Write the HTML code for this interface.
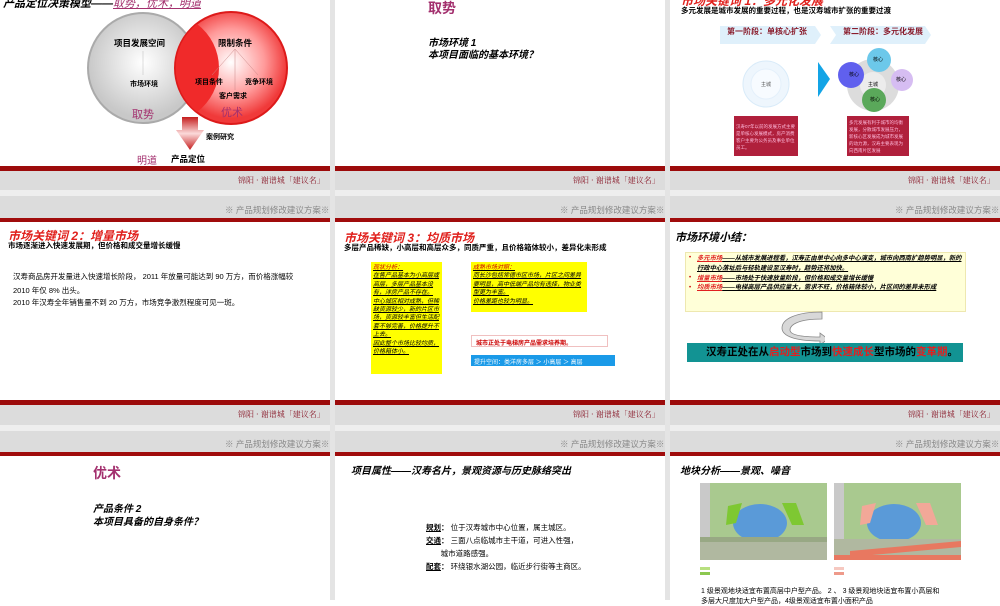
<!DOCTYPE html>
<html><head><meta charset="utf-8"><style>
*{margin:0;padding:0;box-sizing:border-box}
body{width:1000px;height:600px;overflow:hidden;background:#fff;position:relative;font-family:"Liberation Sans","Noto Sans CJK SC",sans-serif;color:#000}
.a{position:absolute;white-space:nowrap}
.sep{position:absolute;top:0;height:600px;width:5px;background:#e4e4e4}
.band{position:absolute;left:0;width:1000px;background:#9c0b0b}
.gray{position:absolute;left:0;width:1000px;background:#dcdcdc}
.gap{position:absolute;left:0;width:1000px;background:#eeeeee}
.ft{position:absolute;font-family:"Noto Serif CJK SC",serif;font-size:8px;color:#8a1c2c;white-space:nowrap}
.hd{position:absolute;font-size:8.5px;color:#888;white-space:nowrap}
.rt{color:#e0201c;font-style:italic;font-weight:bold;font-size:12px}
.bt{font-weight:bold;font-size:8.5px}
.pu{color:#a3306e}
.s7{font-size:7px}
</style></head><body>

<div class="band" style="top:166px;height:5px"></div>
<div class="gray" style="top:171px;height:19px"></div>
<div class="gap" style="top:190px;height:6px"></div>
<div class="gray" style="top:196px;height:22px"></div>
<div class="band" style="top:218px;height:4px;background:#a00c0c"></div>
<div class="band" style="top:400px;height:5px"></div>
<div class="gray" style="top:405px;height:20px"></div>
<div class="gap" style="top:425px;height:6px"></div>
<div class="gray" style="top:431px;height:21px"></div>
<div class="band" style="top:452px;height:4px;background:#a00c0c"></div>
<div class="sep" style="left:330px"></div>
<div class="sep" style="left:665px"></div>

<div class="ft" style="left:238px;top:175px">锦阳 · 谢谱城「建议名」</div>
<div class="ft" style="left:573px;top:175px">锦阳 · 谢谱城「建议名」</div>
<div class="ft" style="left:908px;top:175px">锦阳 · 谢谱城「建议名」</div>
<div class="ft" style="left:238px;top:409px">锦阳 · 谢谱城「建议名」</div>
<div class="ft" style="left:573px;top:409px">锦阳 · 谢谱城「建议名」</div>
<div class="ft" style="left:908px;top:409px">锦阳 · 谢谱城「建议名」</div>
<div class="hd" style="left:225px;top:204px">※ 产品规划修改建议方案※</div>
<div class="hd" style="left:560px;top:204px">※ 产品规划修改建议方案※</div>
<div class="hd" style="left:895px;top:204px">※ 产品规划修改建议方案※</div>
<div class="hd" style="left:225px;top:438px">※ 产品规划修改建议方案※</div>
<div class="hd" style="left:560px;top:438px">※ 产品规划修改建议方案※</div>
<div class="hd" style="left:895px;top:438px">※ 产品规划修改建议方案※</div>

<!-- slide 1 -->
<div class="a" style="left:3px;top:-5px;font-size:11px;font-weight:bold;font-style:italic">产品定位决策模型——<span class="pu" style="font-weight:normal;text-decoration:underline">取势，优术，明道</span></div>
<svg class="a" style="left:80px;top:5px" width="220" height="150">
<defs><radialGradient id="g1" cx="50%" cy="45%"><stop offset="0" stop-color="#fff"/><stop offset="1" stop-color="#c8c8c8"/></radialGradient>
<radialGradient id="g2" cx="50%" cy="45%"><stop offset="0" stop-color="#fff"/><stop offset="0.6" stop-color="#ff9a9a"/><stop offset="1" stop-color="#f03a3a"/></radialGradient>
<linearGradient id="g3" x1="0" y1="0" x2="0" y2="1"><stop offset="0" stop-color="#c51d1d"/><stop offset="0.5" stop-color="#fbdada"/><stop offset="1" stop-color="#c51d1d"/></linearGradient></defs>
<circle cx="63" cy="63" r="55" fill="url(#g1)" stroke="#aaa" stroke-width="2"/>
<circle cx="151" cy="63" r="56" fill="url(#g2)" stroke="#dd1a1a" stroke-width="2"/>
<path d="M117 19 A56 56 0 0 0 117 107 A55 55 0 0 0 117 19Z" fill="#f02a2a"/>
<line x1="63" y1="46" x2="63" y2="70" stroke="#bbb" stroke-width="0.5"/>
<line x1="155" y1="44" x2="132" y2="70" stroke="#c88" stroke-width="0.5"/>
<line x1="155" y1="44" x2="178" y2="70" stroke="#c88" stroke-width="0.5"/>
<line x1="155" y1="44" x2="155" y2="85" stroke="#c88" stroke-width="0.5"/>
<path d="M102 112 L118 112 L118 125 L124 125 L110 145 L96 125 L102 125Z" fill="url(#g3)"/>
</svg>
<div class="a bt" style="left:114px;top:37px">项目发展空间</div>
<div class="a s7" style="left:130px;top:79px;font-weight:bold">市场环境</div>
<div class="a pu" style="left:132px;top:106px;font-size:11px">取势</div>
<div class="a bt" style="left:218px;top:37px">限制条件</div>
<div class="a s7" style="left:195px;top:77px;font-weight:bold">项目条件</div>
<div class="a s7" style="left:245px;top:77px;font-weight:bold">竞争环境</div>
<div class="a s7" style="left:219px;top:91px;font-weight:bold">客户需求</div>
<div class="a pu" style="left:221px;top:104px;font-size:11px">优术</div>
<div class="a s7" style="left:206px;top:132px;font-weight:bold">案例研究</div>
<div class="a pu" style="left:137px;top:152px;font-size:10px">明道</div>
<div class="a bt" style="left:171px;top:153px">产品定位</div>

<!-- slide 2 -->
<div class="a pu" style="left:428px;top:-2px;font-size:14px;font-weight:bold">取势</div>
<div class="a" style="left:428px;top:34px;font-size:10px;font-weight:bold;font-style:italic">市场环境 1</div>
<div class="a" style="left:428px;top:46px;font-size:10px;font-weight:bold;font-style:italic">本项目面临的基本环境？</div>

<!-- slide 3 -->
<div class="a rt" style="left:681px;top:-8px">市场关键词 1：多元化发展</div>
<div class="a" style="left:681px;top:5px;font-size:7.5px;font-weight:bold">多元发展是城市发展的重要过程，也是汉寿城市扩张的重要过渡</div>
<svg class="a" style="left:720px;top:25px" width="220" height="135">
<path d="M0 1 L95 1 L101 10 L95 19 L0 19Z" fill="#dff0fb"/>
<path d="M110 1 L205 1 L211 10 L205 19 L110 19 L116 10Z" fill="#dff0fb"/>
<circle cx="46" cy="59" r="23" fill="#eef6fd" stroke="#d9ebf9"/>
<circle cx="46" cy="59" r="15" fill="#f7fbff" stroke="#e4f0fb"/>
<path d="M98 37 L110 54 L98 72Z" fill="#13a4e6"/>
<circle cx="153" cy="60" r="26" fill="#dcdcdc"/>
<circle cx="153" cy="60" r="13" fill="#ececec"/>
<circle cx="159" cy="35" r="12" fill="#6cc8ea"/>
<circle cx="131" cy="50" r="13" fill="#6060ee"/>
<circle cx="182" cy="55" r="11" fill="#d6bdf2"/>
<circle cx="154" cy="75" r="12" fill="#5aa85a"/>
<rect x="14" y="91" width="64" height="40" fill="#b0203c"/>
<rect x="127" y="91" width="62" height="40" fill="#b0203c"/>
</svg>
<div class="a" style="left:727px;top:26px;font-size:8px;font-weight:bold;color:#8a1c2c">第一阶段：单核心扩张</div>
<div class="a" style="left:843px;top:26px;font-size:8px;font-weight:bold;color:#8a1c2c">第二阶段：多元化发展</div>
<div class="a" style="left:761px;top:81px;font-size:5px;color:#555">主城</div>
<div class="a" style="left:873px;top:56px;font-size:5px">核心</div>
<div class="a" style="left:849px;top:71px;font-size:5px">核心</div>
<div class="a" style="left:896px;top:76px;font-size:5px">核心</div>
<div class="a" style="left:868px;top:81px;font-size:5px">主城</div>
<div class="a" style="left:870px;top:96px;font-size:5px">核心</div>
<div class="a" style="left:736px;top:123px;font-size:4.5px;color:#fbd;line-height:7px;white-space:normal;width:60px">汉寿07年以前的发展方式主要是单核心发展模式，房产消费客户主要为公务员及事业单位员工。</div>
<div class="a" style="left:849px;top:119px;font-size:4.5px;color:#fbd;line-height:7px;white-space:normal;width:58px">多元发展有利于城市的均衡发展，分散城市发展压力，新核心区发展成为城市发展的动力源，汉寿主要表现为向西南片区发展</div>

<!-- slide 4 -->
<div class="a rt" style="left:8px;top:227px">市场关键词 2：增量市场</div>
<div class="a" style="left:8px;top:240px;font-size:7.5px;font-weight:bold">市场逐渐进入快速发展期，但价格和成交量增长缓慢</div>
<div class="a" style="left:13px;top:271px;font-size:7.5px">汉寿商品房开发量进入快速增长阶段， 2011 年放量可能达到 90 万方，而价格涨幅较</div>
<div class="a" style="left:13px;top:285px;font-size:7.5px">2010 年仅 8% 出头。</div>
<div class="a" style="left:13px;top:297px;font-size:7.5px">2010 年汉寿全年销售量不到 20 万方，市场竞争激烈程度可见一斑。</div>

<!-- slide 5 -->
<div class="a rt" style="left:344px;top:229px">市场关键词 3：均质市场</div>
<div class="a" style="left:344px;top:242px;font-size:7.5px;font-weight:bold">多层产品稀缺，小高层和高层众多，同质严重，且价格箱体较小，差异化未形成</div>
<div class="a" style="left:371px;top:262px;width:71px;height:112px;background:#ffff00"></div>
<div class="a" style="left:373px;top:264px;width:68px;font-size:6px;line-height:8.4px;white-space:normal;font-style:italic;text-decoration:underline"><span style="color:#c00">现状分析：</span><br>在售产品基本为小高层或高层，多层产品基本没有，洋房产品不存在。<br>中心城区相对成熟，但稀缺资源较少，新的片区市场，资源较丰富但生活配套不够完善，价格提升不上去。<br>因此整个市场比较均质，价格箱体小。</div>
<div class="a" style="left:471px;top:262px;width:116px;height:50px;background:#ffff00"></div>
<div class="a" style="left:473px;top:264px;width:113px;font-size:6px;line-height:8.4px;white-space:normal;font-style:italic;text-decoration:underline"><span style="color:#c00">成熟市场对照：</span><br>而长沙包括常德市区市场，片区之间差异要明显，高中低端产品均有选择，物业类型更为丰富。<br>价格差距也较为明显。</div>
<div class="a" style="left:471px;top:335px;width:137px;height:12px;border:1px solid #f0c0c0;font-size:6px;color:#c00;font-weight:bold;padding:2px 0 0 4px">城市正处于电梯房产品需求培养期。</div>
<div class="a" style="left:471px;top:355px;width:144px;height:11px;background:#1a9ae8;font-size:6px;color:#fff;padding:1.5px 0 0 3px">提升空间：类洋房多层 ＞ 小高层 ＞ 高层</div>

<!-- slide 6 -->
<div class="a" style="left:675px;top:229px;font-size:11px;font-weight:bold;font-style:italic">市场环境小结：</div>
<div class="a" style="left:685px;top:252px;width:281px;height:60px;background:#ffffd8;border:1px solid #eee8b0"></div>
<div class="a" style="left:684px;top:254px;width:290px;font-size:6.3px;line-height:9.8px;white-space:normal;font-style:italic;font-weight:bold;padding-left:13px;padding-right:10px">
<div><span style="color:#e02020;text-decoration:underline">多元市场</span><span style="text-decoration:underline">——从城市发展进程看，汉寿正由单中心向多中心演变，城市向西南扩趋势明显，新的行政中心落址后与轻轨建设至汉寿时，趋势还将加快。</span></div>
<div><span style="color:#e02020;text-decoration:underline">增量市场</span><span style="text-decoration:underline">——市场处于快速放量阶段，但价格和成交量增长缓慢</span></div>
<div><span style="color:#e02020;text-decoration:underline">均质市场</span><span style="text-decoration:underline">——电梯高层产品供应量大，需求不旺，价格箱体较小，片区间的差异未形成</span></div>
</div>
<div class="a" style="left:689px;top:255px;font-size:6px;color:#c00">•</div>
<div class="a" style="left:689px;top:275px;font-size:6px;color:#c00">•</div>
<div class="a" style="left:689px;top:285px;font-size:6px;color:#c00">•</div>
<svg class="a" style="left:780px;top:311px" width="45" height="32"><path d="M42 1 L42 8 C18 8 10 14 10 19 C10 24 22 26 40 26 L40 22 L48 28 L40 34 L40 30 C15 30 2 25 2 17 C2 8 16 1 42 1Z" fill="#d8d8d8" stroke="#888" stroke-width="0.8"/></svg>
<div class="a" style="left:687px;top:343px;width:276px;height:19px;background:#129393"></div>
<div class="a" style="left:706px;top:345px;font-size:10.5px;font-weight:bold;font-family:'Noto Sans CJK SC',sans-serif;line-height:14px">汉寿正处在从<span style="color:#e02020">启动型</span>市场到<span style="color:#e02020">快速成长</span>型市场的<span style="color:#e02020">变革期</span>。</div>

<!-- slide 7 -->
<div class="a pu" style="left:93px;top:463px;font-size:14px;font-weight:bold">优术</div>
<div class="a" style="left:93px;top:500px;font-size:10px;font-weight:bold;font-style:italic">产品条件 2</div>
<div class="a" style="left:93px;top:513px;font-size:10px;font-weight:bold;font-style:italic">本项目具备的自身条件？</div>

<!-- slide 8 -->
<div class="a" style="left:351px;top:462px;font-size:10px;font-weight:bold;font-style:italic">项目属性——汉寿名片，景观资源与历史脉络突出</div>
<div class="a" style="left:426px;top:521px;font-size:7.5px;line-height:13px"><b><u>规划</u>：</b> 位于汉寿城市中心位置，属主城区。<br><b><u>交通</u>：</b> 三面八点临城市主干道，可进入性强，<br>&nbsp;&nbsp;&nbsp;&nbsp;&nbsp;&nbsp;&nbsp;城市道路感强。<br><b><u>配套</u>：</b> 环绕银水湖公园，临近步行街等主商区。</div>

<!-- slide 9 -->
<div class="a" style="left:680px;top:462px;font-size:10px;font-weight:bold;font-style:italic">地块分析——景观、噪音</div>
<svg class="a" style="left:700px;top:483px" width="265" height="95">
<rect x="0" y="0" width="127" height="77" fill="#a9c98f"/>
<rect x="134" y="0" width="127" height="77" fill="#a9c98f"/>
<rect x="0" y="0" width="10" height="77" fill="#c9c9c9"/><rect x="134" y="0" width="10" height="77" fill="#c9c9c9"/>
<ellipse cx="60" cy="40" rx="27" ry="19" fill="#5a9ad8"/><ellipse cx="194" cy="40" rx="27" ry="19" fill="#5a9ad8"/>
<path d="M28 23 L42 20 L36 40 L26 42Z" fill="#7ec832"/><path d="M82 20 L96 20 L104 42 L92 42Z" fill="#7ec832"/>
<rect x="0" y="56" width="127" height="21" fill="#b0b8a0"/><rect x="0" y="54" width="127" height="5" fill="#98a884"/>
<path d="M162 23 L176 20 L170 40 L160 42Z" fill="#f2a898"/><path d="M216 20 L230 20 L238 42 L226 42Z" fill="#f2a898"/>
<rect x="134" y="56" width="127" height="21" fill="#b0b8a0"/><path d="M150 68 L261 58 L261 64 L150 74Z" fill="#e87860"/><rect x="134" y="72" width="127" height="5" fill="#e87860"/>
<rect x="0" y="84" width="10" height="3" fill="#b8e080"/><rect x="0" y="89" width="10" height="3" fill="#8cc850"/>
<rect x="134" y="84" width="10" height="3" fill="#f6c8c0"/><rect x="134" y="89" width="10" height="3" fill="#ee9a8a"/>
</svg>
<div class="a" style="left:701px;top:586px;font-size:7px">1 级景观地块适宜布置高层中户型产品。 2 、 3 级景观地块适宜布置小高层和</div>
<div class="a" style="left:701px;top:596px;font-size:7px">多层大尺度加大户型产品，4级景观适宜布置小面积产品</div>
</body></html>
